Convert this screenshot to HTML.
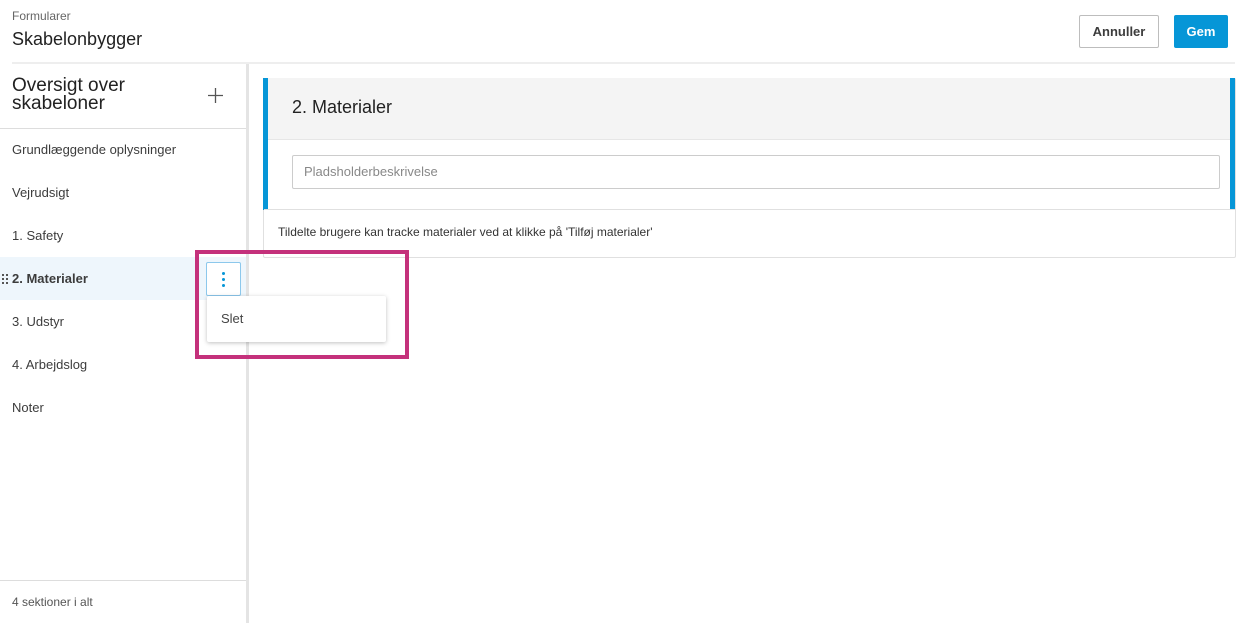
<!DOCTYPE html>
<html><head><style>
*{box-sizing:border-box;margin:0;padding:0}
body{width:1240px;height:623px;background:#fff;font-family:"Liberation Sans",sans-serif;color:#3c3c3c;position:relative;overflow:hidden}
.a{position:absolute}
.item{position:absolute;left:0;width:246px;height:43px;line-height:43px;padding-left:12px;font-size:13px;color:#3c3c3c}
</style></head><body>
<div class="a" style="left:12px;top:9px;font-size:12px;color:#666">Formularer</div>
<div class="a" style="left:12px;top:29px;font-size:18px;color:#222">Skabelonbygger</div>
<div class="a" style="left:1079px;top:15px;width:80px;height:33px;border:1px solid #bdbdbd;border-radius:2px;font-size:13px;font-weight:bold;text-align:center;line-height:31px;color:#3c3c3c">Annuller</div>
<div class="a" style="left:1174px;top:15px;width:54px;height:33px;background:#0696d7;border-radius:2px;font-size:13px;font-weight:bold;text-align:center;line-height:33px;color:#fff">Gem</div>
<div class="a" style="left:12px;top:62px;width:1223px;height:2px;background:#eee"></div>
<div class="a" style="left:246px;top:64px;width:3px;height:559px;background:#e4e4e4"></div>
<div class="a" style="left:12px;top:77px;font-size:19px;line-height:18px;color:#222">Oversigt over<br>skabeloner</div>
<svg class="a" style="left:208px;top:88px" width="15" height="15"><path d="M7.5 0V15M0 7.5H15" stroke="#555" stroke-width="1.3"/></svg>
<div class="a" style="left:0;top:128px;width:246px;height:1px;background:#ddd"></div>
<div class="item" style="top:128px">Grundlæggende oplysninger</div>
<div class="item" style="top:171px">Vejrudsigt</div>
<div class="item" style="top:214px">1. Safety</div>
<div class="item" style="top:257px;background:#eef6fc;font-weight:bold">2. Materialer</div>
<svg class="a" style="left:2px;top:274px" width="7" height="10"><g fill="#555"><rect x="0" y="0" width="2" height="2"/><rect x="4" y="0" width="2" height="2"/><rect x="0" y="4" width="2" height="2"/><rect x="4" y="4" width="2" height="2"/><rect x="0" y="8" width="2" height="2"/><rect x="4" y="8" width="2" height="2"/></g></svg>
<div class="item" style="top:300px">3. Udstyr</div>
<div class="item" style="top:343px">4. Arbejdslog</div>
<div class="item" style="top:386px">Noter</div>
<div class="a" style="left:0;top:580px;width:246px;height:1px;background:#ddd"></div>
<div class="a" style="left:12px;top:595px;font-size:12px;color:#555">4 sektioner i alt</div>

<div class="a" style="left:263px;top:78px;width:973px;height:180px;border:1px solid #e0e0e0;border-radius:2px"></div>
<div class="a" style="left:263px;top:78px;width:5px;height:132px;background:#0696d7"></div>
<div class="a" style="left:1230px;top:78px;width:5px;height:132px;background:#0696d7"></div>
<div class="a" style="left:268px;top:78px;width:962px;height:62px;background:#f4f4f4;border-bottom:1px solid #e6e6e6"></div>
<div class="a" style="left:292px;top:97px;font-size:18px;color:#222">2. Materialer</div>
<div class="a" style="left:292px;top:155px;width:928px;height:34px;border:1px solid #ccc;border-radius:2px;font-size:13px;color:#888;line-height:32px;padding-left:11px">Pladsholderbeskrivelse</div>
<div class="a" style="left:264px;top:209px;width:971px;height:1px;background:#e0e0e0"></div>
<div class="a" style="left:278px;top:225px;font-size:12px;color:#333">Tildelte brugere kan tracke materialer ved at klikke på 'Tilføj materialer'</div>

<div class="a" style="left:195px;top:250px;width:214px;height:109px;border:4px solid #c4317b"></div>
<div class="a" style="left:206px;top:262px;width:35px;height:34px;border:1px solid #8cc8ec;border-radius:2px;background:#fff"></div>
<div class="a" style="left:222px;top:272px;width:3px;height:3px;border-radius:50%;background:#0696d7;box-shadow:0 6px 0 #0696d7,0 12px 0 #0696d7"></div>
<div class="a" style="left:207px;top:296px;width:179px;height:46px;background:#fff;border-radius:2px;box-shadow:0 1px 4px rgba(0,0,0,.25)"></div>
<div class="a" style="left:221px;top:311px;font-size:13px;color:#444">Slet</div>
</body></html>
